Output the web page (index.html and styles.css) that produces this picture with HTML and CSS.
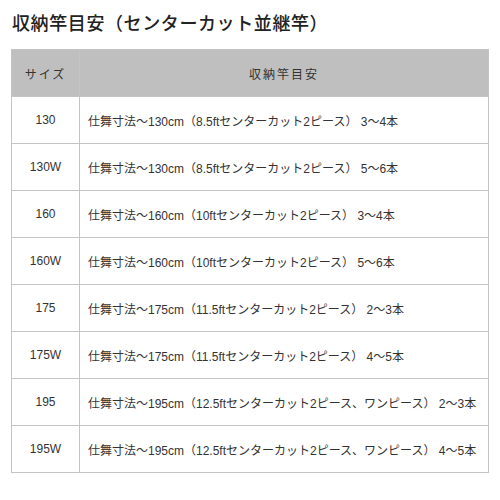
FILE: index.html
```html
<!DOCTYPE html>
<html lang="ja">
<head>
<meta charset="utf-8">
<link rel="stylesheet" href="styles.css">
</head>
<body>
<h2 class="title">収納竿目安（センターカット並継竿）</h2>
<table class="guide">
  <thead>
    <tr><th class="size">サイズ</th><th>収納竿目安</th></tr>
  </thead>
  <tbody>
    <tr><td class="size">130</td><td>仕舞寸法〜130cm（8.5ftセンターカット2ピース） 3〜4本</td></tr>
    <tr><td class="size">130W</td><td>仕舞寸法〜130cm（8.5ftセンターカット2ピース） 5〜6本</td></tr>
    <tr><td class="size">160</td><td>仕舞寸法〜160cm（10ftセンターカット2ピース） 3〜4本</td></tr>
    <tr><td class="size">160W</td><td>仕舞寸法〜160cm（10ftセンターカット2ピース） 5〜6本</td></tr>
    <tr><td class="size">175</td><td>仕舞寸法〜175cm（11.5ftセンターカット2ピース） 2〜3本</td></tr>
    <tr><td class="size">175W</td><td>仕舞寸法〜175cm（11.5ftセンターカット2ピース） 4〜5本</td></tr>
    <tr><td class="size">195</td><td>仕舞寸法〜195cm（12.5ftセンターカット2ピース、ワンピース） 2〜3本</td></tr>
    <tr><td class="size">195W</td><td>仕舞寸法〜195cm（12.5ftセンターカット2ピース、ワンピース） 4〜5本</td></tr>
  </tbody>
</table>
</body>
</html>
```
FILE: styles.css
```css
html, body { margin: 0; padding: 0; background: #fff; }
body {
  font-family: "Liberation Sans", "Noto Sans CJK JP", sans-serif;
  color: #333;
  padding: 0 12px 0 11px;
}
.title {
  margin: 0;
  padding: 13px 0 0 1px;
  height: 38px;
  box-sizing: border-box;
  font-size: 18px;
  line-height: 22px;
  font-weight: 500;
  letter-spacing: 0.6px;
  color: #222;
}
.guide {
  width: 478px;
  margin-top: 11px;
  border-collapse: collapse;
  border: 1px solid #c4c4c4;
  font-size: 12px;
  table-layout: fixed;
}
.guide th, .guide td {
  border: 1px solid #c4c4c4;
  height: 47px;
  padding: 0 0 0 8px;
  box-sizing: border-box;
  white-space: nowrap;
}
.guide th {
  background: #bfbfbf;
  font-weight: normal;
  color: #333;
  letter-spacing: 2px;
  text-align: center;
  padding: 0;
}
.guide td { text-align: left; color: #333; }
.guide .size { width: 68px; text-align: center; padding: 0; }
```
